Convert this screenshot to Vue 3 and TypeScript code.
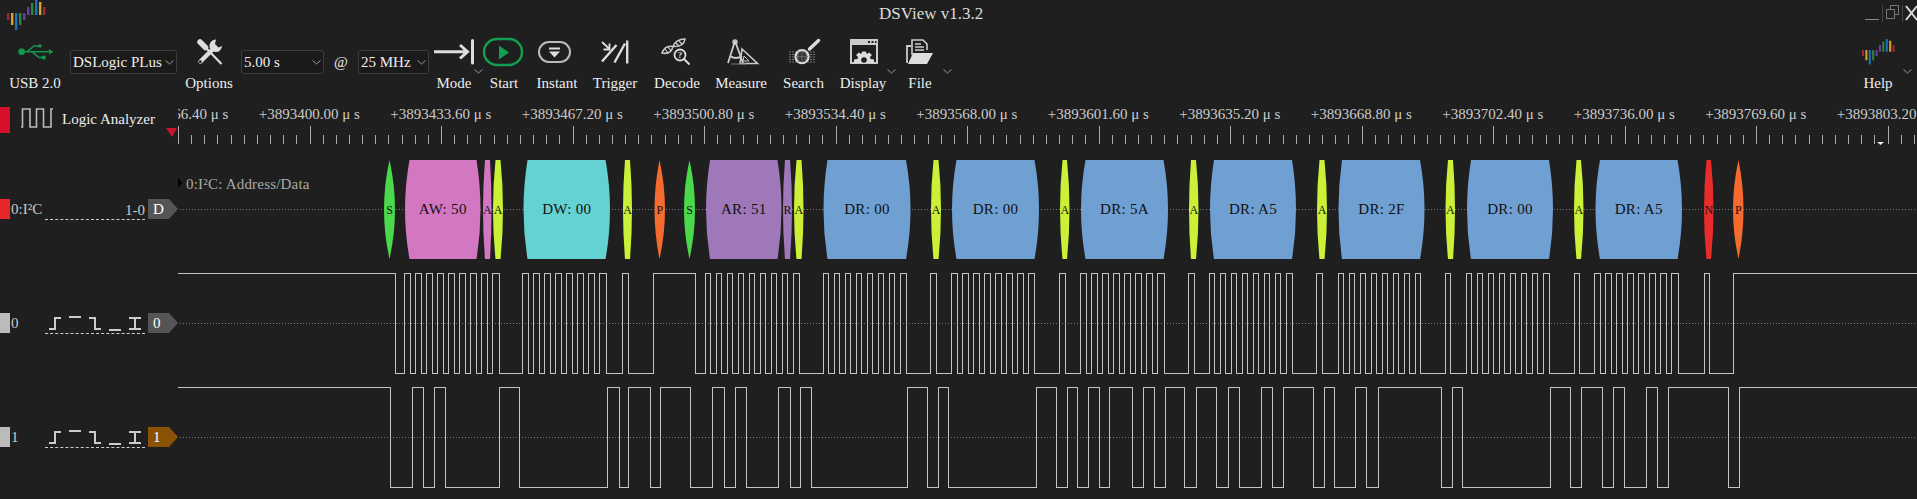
<script setup lang="ts">
type Tool = { id: string, label: string, width: number, menu?: boolean }
type Bubble = { x1: number, x2: number, t1: number, t2: number, label: string, color: string }

const VIEW_X = 178

const leftTools: Tool[] = [
  { id: 'mode', label: 'Mode', width: 50, menu: true },
  { id: 'start', label: 'Start', width: 50 },
  { id: 'instant', label: 'Instant', width: 56 },
  { id: 'trigger', label: 'Trigger', width: 60 },
  { id: 'decode', label: 'Decode', width: 64 },
  { id: 'measure', label: 'Measure', width: 64 },
  { id: 'search', label: 'Search', width: 61 },
  { id: 'display', label: 'Display', width: 58, menu: true },
  { id: 'file', label: 'File', width: 56, menu: true },
]

const logoBars = [
  { x: 7, y: 13, h: 7, c: '#a8262c' },
  { x: 11, y: 13, h: 12, c: '#d4a437' },
  { x: 15, y: 13, h: 17, c: '#1e73b8' },
  { x: 19, y: 13, h: 12, c: '#2a8a3e' },
  { x: 23, y: 13, h: 7, c: '#6b3fa0' },
  { x: 27, y: 7, h: 8, c: '#6b3fa0' },
  { x: 31, y: 3, h: 12, c: '#2a8a3e' },
  { x: 35, y: 0, h: 15, c: '#1e73b8' },
  { x: 39, y: 2, h: 13, c: '#d4a437' },
  { x: 43, y: 7, h: 8, c: '#a8262c' },
]

const rulerLabels = [
  '+3893366.40', '+3893400.00', '+3893433.60', '+3893467.20', '+3893500.80', '+3893534.40', '+3893568.00',
  '+3893601.60', '+3893635.20', '+3893668.80', '+3893702.40', '+3893736.00', '+3893769.60', '+3893803.20',
]

const ticks: { x: number, major: boolean }[] = []
for (let i = 0; i * 13.15 < 1740; i++) {
  ticks.push({ x: Math.round(i * 13.15) + 0.5, major: i % 10 === 0 })
}

const traces = [
  { name: '0:I²C', tag: 'tag-red', tab: 'D', tabClass: '', decoder: true },
  { name: '0', tag: 'tag-grey', tab: '0', tabClass: '', decoder: false },
  { name: '1', tag: 'tag-grey', tab: '1', tabClass: 'tab-brown', decoder: false },
]

const S = '#4ad94a'
const AW = '#d377c2'
const ACK = '#cbf037'
const DW = '#64d2d2'
const P = '#f56b2f'
const AR = '#9e78b8'
const DR = '#709fd2'
const N = '#e82c2c'

const bubbles: Bubble[] = [
  { x1: 384, x2: 395, t1: 389.5, t2: 389.5, label: 'S', color: S },
  { x1: 405, x2: 480.5, t1: 409.5, t2: 476.5, label: 'AW: 50', color: AW },
  { x1: 483, x2: 491.5, t1: 485, t2: 490, label: 'A', color: AW },
  { x1: 493, x2: 503, t1: 495.5, t2: 500.5, label: 'A', color: ACK },
  { x1: 523.5, x2: 610, t1: 527.5, t2: 605.5, label: 'DW: 00', color: DW },
  { x1: 623, x2: 632, t1: 625, t2: 630, label: 'A', color: ACK },
  { x1: 654.5, x2: 665, t1: 659.5, t2: 659.5, label: 'P', color: P },
  { x1: 684, x2: 695, t1: 689.5, t2: 689.5, label: 'S', color: S },
  { x1: 706, x2: 781.5, t1: 710, t2: 777.5, label: 'AR: 51', color: AR },
  { x1: 783, x2: 792, t1: 785, t2: 790, label: 'R', color: AR },
  { x1: 794, x2: 803.5, t1: 796.5, t2: 801.5, label: 'A', color: ACK },
  { x1: 823.5, x2: 910.5, t1: 827.5, t2: 906, label: 'DR: 00', color: DR },
  { x1: 931, x2: 941, t1: 933.5, t2: 938.5, label: 'A', color: ACK },
  { x1: 952, x2: 1039, t1: 956.5, t2: 1034.5, label: 'DR: 00', color: DR },
  { x1: 1060, x2: 1069.5, t1: 1062.5, t2: 1067, label: 'A', color: ACK },
  { x1: 1081, x2: 1168, t1: 1085.5, t2: 1163.5, label: 'DR: 5A', color: DR },
  { x1: 1189, x2: 1198.5, t1: 1191, t2: 1196, label: 'A', color: ACK },
  { x1: 1210, x2: 1296, t1: 1214, t2: 1292, label: 'DR: A5', color: DR },
  { x1: 1317, x2: 1327, t1: 1319.5, t2: 1324.5, label: 'A', color: ACK },
  { x1: 1338.5, x2: 1424.5, t1: 1342, t2: 1420, label: 'DR: 2F', color: DR },
  { x1: 1445.5, x2: 1455, t1: 1448, t2: 1453, label: 'A', color: ACK },
  { x1: 1467, x2: 1553, t1: 1471, t2: 1549, label: 'DR: 00', color: DR },
  { x1: 1574, x2: 1583.5, t1: 1576.5, t2: 1581, label: 'A', color: ACK },
  { x1: 1595.5, x2: 1682, t1: 1600, t2: 1677.5, label: 'DR: A5', color: DR },
  { x1: 1704, x2: 1713.5, t1: 1706.5, t2: 1711, label: 'N', color: N },
  { x1: 1733, x2: 1743.5, t1: 1738.5, t2: 1738.5, label: 'P', color: P },
]

function bubblePath(b: Bubble) {
  const l = b.x1 - VIEW_X
  const r = b.x2 - VIEW_X
  const tl = b.t1 - VIEW_X
  const tr = b.t2 - VIEW_X
  return `M${tl} 8L${tr} 8Q${2 * r - tr} 57.5 ${tr} 107L${tl} 107Q${2 * l - tl} 57.5 ${tl} 8Z`
}

// clock bursts: n pulses, last falling edge given
function burst(start: number, n: number, end: number) {
  const out: number[] = []
  for (let i = 0; i < n; i++) {
    out.push(start + i * 11)
    out.push(i === n - 1 ? end : start + i * 11 + 5.4)
  }
  return out
}

const edges0 = [
  394.7, ...burst(404.3, 9, 498.7), ...burst(522.3, 8, 605.7), 622.3, 627.7, 653.3, 694.7,
  ...burst(705, 9, 798.7), ...burst(822.7, 8, 905.7), 930, 935.7, ...burst(951.3, 8, 1033.7), 1059.3, 1064.7,
  ...burst(1080.3, 8, 1163.7), 1188.3, 1193.7, ...burst(1208.6, 8, 1292), 1316.4, 1321.6,
  ...burst(1337.6, 8, 1420), 1444.8, 1450.4, ...burst(1465.6, 8, 1548.8), 1573.6, 1578.8,
  ...burst(1594.4, 8, 1677.6), 1703.6, 1708.8, 1732.8,
]

const edges1 = [
  389.5, 411.7, 422.7, 433.7, 444.7, 498.7, 518.7, 606.7, 618.7, 628.3, 649.7, 659.7, 689.7, 712.3, 723.7, 734.7, 745.7,
  778.3, 789.7, 799.7, 810.7, 907.3, 926.7, 937.7, 947.7, 1035.7, 1055.7, 1066.7, 1076.7, 1087.7, 1098.7, 1109.3,
  1131.7, 1142.7, 1153.7, 1164.7, 1183.7, 1195.7, 1215.7, 1227.7, 1238.7, 1260.7, 1271.7, 1282.7, 1312.8, 1323.6,
  1333.6, 1354.8, 1365.6, 1377.6, 1441.2, 1452, 1462, 1550, 1569.6, 1580.8, 1601.6, 1612.8, 1623.6, 1645.6, 1656.8,
  1668, 1728, 1738.8,
]

function wavePath(edges: number[], high: number, low: number) {
  let d = `M0 ${high}`
  let up = true
  for (const e of edges) {
    d += `H${Math.round(e - VIEW_X) + 0.5}V${up ? low : high}`
    up = !up
  }
  return d + 'H1739'
}

const wave0 = wavePath(edges0, 121.5, 221.5)
const wave1 = wavePath(edges1, 235.5, 335.5)
</script>

<template>
  <div class="app">
    <header class="titlebar">
      <svg class="logo" width="50" height="30" viewBox="0 0 50 30">
        <rect v-for="b in logoBars" :key="b.x" :x="b.x" :y="b.y" width="2.4" :height="b.h" :fill="b.c" />
      </svg>
      <div class="title">DSView v1.3.2</div>
      <div class="winbtns">
        <svg width="52" height="30" viewBox="0 0 52 30">
          <path d="M0 19.5H14" stroke="#888" fill="none" />
          <path d="M17.5 5V22" stroke="#444" fill="none" />
          <path d="M21.5 9.5H29.5V18.5H21.5ZM25.5 9.5V5.5H33.5V14.5H29.5" stroke="#777" fill="none" />
          <path d="M37.5 5V22" stroke="#444" fill="none" />
          <path d="M41 6L52 20M52 6L41 20" stroke="#ddd" stroke-width="2" fill="none" />
        </svg>
      </div>
    </header>

    <div class="toolbar">
      <div class="tool tool-usb">
        <svg width="50" height="32" viewBox="0 0 50 32">
          <g fill="#12974e" stroke="#12974e">
            <circle cx="11.7" cy="15.7" r="3" />
            <path d="M12 15.7H40" stroke-width="1.5" />
            <path d="M39 13L43.5 15.7L39 18.5Z" stroke="none" />
            <path d="M17 15.7L24 10H29M22 15.7L29 21.5H33" fill="none" stroke-width="1.5" />
            <circle cx="30" cy="10" r="1.8" stroke="none" />
            <rect x="32" y="19.7" width="3.6" height="3.6" stroke="none" />
          </g>
        </svg>
        <span class="tool-label">USB 2.0</span>
      </div>

      <div class="combo combo-device"><span>DSLogic PLus</span><svg class="chev" width="9" height="5" viewBox="0 0 9 5"><path d="M0.5 0.5L4.5 4L8.5 0.5" /></svg></div>

      <div class="tool tool-options">
        <svg width="50" height="32" viewBox="0 0 50 32">
          <g fill="none" stroke="#ddd" stroke-linecap="round">
            <path d="M16 6L21.5 11.5" stroke-width="5.5" />
            <path d="M21.5 11.5L37.5 28" stroke-width="2.2" stroke-linecap="butt" />
            <path d="M16.5 25.5L30 12" stroke-width="4.4" />
          </g>
          <path d="M32 3.5A6.3 6.3 0 1 0 38 10L34.5 11.5L31 8Z" fill="#ddd" />
          <circle cx="16.3" cy="25.7" r="1.4" fill="#1f1f1f" />
        </svg>
        <span class="tool-label">Options</span>
      </div>

      <div class="combo combo-time"><span>5.00 s</span><svg class="chev" width="9" height="5" viewBox="0 0 9 5"><path d="M0.5 0.5L4.5 4L8.5 0.5" /></svg></div>
      <div class="at">@</div>
      <div class="combo combo-rate"><span>25 MHz</span><svg class="chev" width="9" height="5" viewBox="0 0 9 5"><path d="M0.5 0.5L4.5 4L8.5 0.5" /></svg></div>

      <div v-for="t in leftTools" :key="t.id" class="tool" :style="{ width: t.width + 'px' }">
        <svg width="50" height="32" viewBox="0 0 50 32">
          <g v-if="t.id === 'mode'" fill="none" stroke="#ddd">
            <path d="M5 15.7H38M31 9L38.5 15.7L31 22.5" stroke-width="3" />
            <path d="M43.5 4.5V27" stroke-width="3" stroke-linecap="round" />
          </g>
          <g v-else-if="t.id === 'start'">
            <rect x="5" y="3" width="38" height="26" rx="13" fill="none" stroke="#12a050" stroke-width="2.4" />
            <path d="M20 9.5L30 16.5L20 23.5Z" fill="#12a050" />
          </g>
          <g v-else-if="t.id === 'instant'">
            <rect x="7" y="6" width="31" height="20" rx="10" fill="none" stroke="#bbb" stroke-width="2" />
            <rect x="17" y="11.5" width="11" height="2" fill="#ddd" />
            <path d="M17 15.5H28L22.5 21.5Z" fill="#ddd" />
          </g>
          <g v-else-if="t.id === 'trigger'" fill="none" stroke="#ddd" stroke-width="2.4">
            <path d="M12 6L19.5 13M19.5 7.5V13.5H13.5" stroke-width="1.8" />
            <path d="M12 25.5L26.5 9M24.5 26.5L35 7.5" />
            <path d="M37.2 4.5V27.5" />
          </g>
          <g v-else-if="t.id === 'decode'">
            <g fill="none" stroke="#ccc">
              <path d="M10 17Q13 9 21 10.5Q19 19 10 17ZM21 10.5Q24 3 33 3Q32 11 21 10.5Z" stroke-width="1.5" />
              <path d="M13 13L16 17M16 11L19 15M24 7L27 10M27 5L30 8" stroke-width="1.2" />
            </g>
            <circle cx="28" cy="19" r="5.5" fill="#1f1f1f" stroke="#ddd" stroke-width="1.8" />
            <path d="M32 23L37.5 28.5" stroke="#ddd" stroke-width="2" />
            <text x="28" y="22" class="qmark">?</text>
          </g>
          <g v-else-if="t.id === 'measure'" fill="none" stroke="#ccc">
            <path d="M19 5L12 27M19 5L27 27M14 20Q20 24 26 20" stroke-width="1.8" />
            <circle cx="19" cy="6" r="2" stroke-width="1.4" />
            <path d="M26 13L41.5 27.5H24Z" stroke-width="1.6" />
            <path d="M28 20L33 25H27Z" stroke-width="1" />
            <path d="M15 28H30" stroke="#777" stroke-width="1" />
          </g>
          <g v-else-if="t.id === 'search'">
            <g stroke="#777" stroke-width="1">
              <path d="M10 16H37M10 18.5H37M10 21H37M10 23.5H37M10 26H37" stroke-dasharray="2 1" />
            </g>
            <circle cx="23" cy="20.7" r="6.5" fill="#333" stroke="#ddd" stroke-width="2.2" />
            <path d="M23 14.7V26.7M17 20.7H29M20 15.2Q17 20.7 20 26.2M26 15.2Q29 20.7 26 26.2" stroke="#777" fill="none" stroke-width="0.8" />
            <path d="M30.5 13L39.5 4.5" stroke="#ddd" stroke-width="3.4" stroke-linecap="round" />
          </g>
          <g v-else-if="t.id === 'display'">
            <rect x="13" y="4" width="26" height="23" fill="none" stroke="#ccc" stroke-width="2" />
            <rect x="13" y="4" width="26" height="5" fill="#ccc" />
            <path d="M30 6H32M33.5 6H35.5M37 6H38.5" stroke="#1f1f1f" stroke-width="2" fill="none" />
            <path d="M16 27V23.5L19.5 23L20 21L18 19L21 16.5L23 18L24.5 15.5H27.5L29 18L31 16.5L34 19L32 21L32.5 23L36 23.5V27Z" fill="#ddd" />
            <circle cx="26" cy="24" r="2.8" fill="#1f1f1f" />
          </g>
          <g v-else-if="t.id === 'file'">
            <path d="M17 19V4H28L32 8V14" fill="none" stroke="#ccc" stroke-width="1.6" />
            <path d="M20 8H26M20 11H29M20 14H29" stroke="#ccc" stroke-width="1.4" fill="none" />
            <path d="M12 27V10H16M12 27" fill="none" stroke="#ccc" stroke-width="1.8" />
            <path d="M13 28L18 17H38L32 28Z" fill="#ddd" />
          </g>
        </svg>
        <span class="tool-label">{{ t.label }}</span>
        <svg v-if="t.menu" class="menu-chev" width="9" height="5" viewBox="0 0 9 5"><path d="M0.5 0.5L4.5 4L8.5 0.5" /></svg>
      </div>

      <div class="tool tool-help">
        <svg width="50" height="32" viewBox="0 0 50 32">
          <g transform="translate(3 3) scale(0.85)">
            <rect v-for="b in logoBars" :key="b.x" :x="b.x" :y="b.y" width="2.4" :height="b.h" :fill="b.c" />
          </g>
        </svg>
        <span class="tool-label">Help</span>
        <svg class="menu-chev" width="9" height="5" viewBox="0 0 9 5"><path d="M0.5 0.5L4.5 4L8.5 0.5" /></svg>
      </div>
    </div>

    <div class="ruler-row">
      <div class="ruler-head">
        <div class="mode-tag"></div>
        <svg class="wave-icon" width="34" height="22" viewBox="0 0 34 22">
          <path d="M1 20H2.5V2H10V20H16.5V2H23.5V20H31V2H33" fill="none" stroke="#bbb" stroke-width="1.6" />
        </svg>
        <span class="mode-name">Logic Analyzer</span>
        <svg class="cursor-mark" width="11" height="9" viewBox="0 0 11 9"><path d="M0 0H11L6 9Z" fill="#c8142c" /></svg>
      </div>
      <svg class="ruler" width="1739" height="54" viewBox="0 0 1739 54">
        <text v-for="(label, i) in rulerLabels" :key="label" :x="i * 131.5 - 0.2" y="21" class="ruler-text">{{ label }} μ s</text>
        <path v-for="t in ticks" :key="t.x" :d="`M${t.x} ${t.major ? 28 : 37}V46`" stroke="#aaa" fill="none" />
        <path d="M1699 44H1706L1702.5 47Z" fill="#eee" />
      </svg>
    </div>

    <div class="traces">
      <div class="heads">
        <div v-for="t in traces" :key="t.name" class="head">
          <div class="tag" :class="t.tag"></div>
          <div class="name">{{ t.name }}</div>
          <div class="settings">
            <span v-if="t.decoder" class="range">1-0</span>
            <svg v-else width="100" height="19" viewBox="0 0 100 19">
              <g fill="none" stroke="#ccc" stroke-width="2">
                <path d="M4 15H10V4H16" />
                <path d="M24 3H36" />
                <path d="M44 4H50V15H56" />
                <path d="M64 16H76" />
                <path d="M84 4H96M84 15H96M90 4V15" />
              </g>
            </svg>
          </div>
          <div class="tab" :class="t.tabClass">{{ t.tab }}</div>
        </div>
      </div>
      <svg class="view" width="1739" height="347" viewBox="0 0 1739 347">
        <g stroke="#777" stroke-dasharray="1 2" fill="none">
          <path d="M2 57.5H1739" />
          <path d="M2 171.5H1739" />
          <path d="M2 285.5H1739" />
        </g>
        <g class="wave" fill="none" stroke="#c4c4c4">
          <path :d="wave0" />
          <path :d="wave1" />
        </g>
        <path d="M0 26L4 31L0 36Z" fill="#000" />
        <text x="8" y="37" class="decoder-name">0:I²C: Address/Data</text>
        <g v-for="b in bubbles" :key="b.x1">
          <path :d="bubblePath(b)" :fill="b.color" />
          <text :x="(b.x1 + b.x2) / 2 - VIEW_X" y="62" class="bubble-text" :class="{ narrow: b.x2 - b.x1 < 12 }">{{ b.label }}</text>
        </g>
      </svg>
    </div>
  </div>
</template>

<style>
html, body { background: #1f1f1f; overflow: hidden; }
</style>

<style scoped>
.app { width: 1917px; height: 499px; overflow: hidden; background: #1f1f1f; color: #eee; font: 15px "Liberation Serif", "Noto Sans CJK TC", serif; }

.titlebar { display: grid; grid-template-columns: 879px auto 1fr; height: 30px; }
.logo { display: block; }
.title { font-size: 17px; line-height: 28px; color: #ddd; }
.winbtns { display: flex; justify-content: flex-end; }

.toolbar { display: flex; height: 68px; }
.tool { position: relative; display: flex; flex-direction: column; align-items: center; padding-top: 6px; flex: none; }
.tool svg { flex: none; }
.tool-label { margin-top: 6px; line-height: 18px; white-space: nowrap; }
.tool-usb { width: 70px; }
.tool-options { width: 64px; }
.tool-help { width: 60px; margin-left: auto; margin-right: 9px; }
.menu-chev { position: absolute; right: -4px; top: 39px; }
.menu-chev path, .chev path { fill: none; stroke: #999; }

.combo { display: flex; align-items: center; justify-content: space-between; height: 24px; margin-top: 20px; padding: 0 2px 0 2px; box-sizing: border-box; flex: none; white-space: nowrap; background: #1a1a1a; border: 1px solid #3c3c3c; border-radius: 3px; }
.chev { flex: none; }
.combo-device { width: 107px; }
.combo-time { width: 83px; }
.combo-rate { width: 71px; }
.at { width: 34px; flex: none; margin-top: 20px; line-height: 24px; text-align: center; }

.ruler-row { display: flex; height: 54px; }
.ruler-head { position: relative; width: 178px; height: 40px; flex: none; display: flex; align-items: center; }
.mode-tag { width: 10px; height: 26px; margin-top: 4px; background: #d8102a; }
.wave-icon { margin-left: 10px; }
.mode-name { margin: 2px 0 0 8px; white-space: nowrap; }
.cursor-mark { position: absolute; left: 166px; top: 30px; }
.ruler { display: block; flex: none; }
.ruler-text { fill: #ccc; font-size: 15px; text-anchor: middle; }

.traces { display: flex; }
.heads { width: 178px; flex: none; }
.head { display: flex; align-items: center; height: 114px; }
.tag { width: 10px; height: 20px; flex: none; }
.tag-red { background: #e8262a; }
.tag-grey { background: #bbb; }
.name { width: 35px; flex: none; padding-left: 1px; box-sizing: border-box; color: #ccc; white-space: nowrap; }
.settings { display: flex; align-items: flex-end; justify-content: flex-end; width: 100px; height: 20px; flex: none; border-bottom: 1px dashed #ccc; color: #ccc; line-height: 18px; }
.settings svg { display: block; }
.tab { width: 30px; height: 20px; margin-left: 3px; padding-left: 5px; box-sizing: border-box; flex: none; line-height: 20px; color: #fff; background: #555; clip-path: polygon(0 0, 70% 0, 100% 50%, 70% 100%, 0 100%); }
.tab-brown { background: #8a5205; }

.view { display: block; flex: none; }
.wave { shape-rendering: crispEdges; }
.decoder-name { fill: #aaa; font-size: 15px; letter-spacing: 0.2px; }
.bubble-text { fill: #111; font-size: 15px; letter-spacing: 0.3px; text-anchor: middle; }
.bubble-text.narrow { font-size: 12px; letter-spacing: 0; }
.qmark { fill: #ddd; font-size: 9px; font-weight: bold; text-anchor: middle; }
</style>
